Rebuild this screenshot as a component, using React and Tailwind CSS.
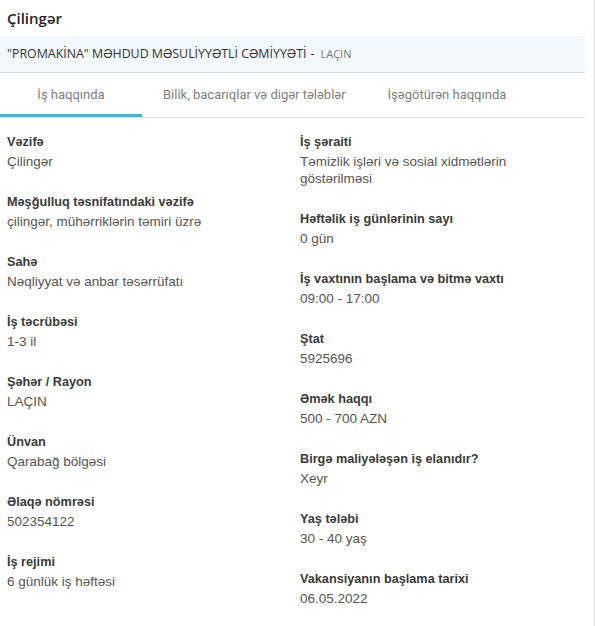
import React from 'react';

const LEFT_FIELDS = [
  { label: 'Vəzifə', value: 'Çilingər' },
  { label: 'Məşğulluq təsnifatındaki vəzifə', value: 'çilingər, mühərriklərin təmiri üzrə' },
  { label: 'Sahə', value: 'Nəqliyyat və anbar təsərrüfatı' },
  { label: 'İş təcrübəsi', value: '1-3 il' },
  { label: 'Şəhər / Rayon', value: 'LAÇIN' },
  { label: 'Ünvan', value: 'Qarabağ bölgəsi' },
  { label: 'Əlaqə nömrəsi', value: '502354122' },
  { label: 'İş rejimi', value: '6 günlük iş həftəsi' },
];

const RIGHT_FIELDS = [
  { label: 'İş şəraiti', value: 'Təmizlik işləri və sosial xidmətlərin göstərilməsi' },
  { label: 'Həftəlik iş günlərinin sayı', value: '0 gün' },
  { label: 'İş vaxtının başlama və bitmə vaxtı', value: '09:00 - 17:00' },
  { label: 'Ştat', value: '5925696' },
  { label: 'Əmək haqqı', value: '500 - 700 AZN' },
  { label: 'Birgə maliyələşən iş elanıdır?', value: 'Xeyr' },
  { label: 'Yaş tələbi', value: '30 - 40 yaş' },
  { label: 'Vakansiyanın başlama tarixi', value: '06.05.2022' },
];

const TABS = ['İş haqqında', 'Bilik, bacarıqlar və digər tələblər', 'İşəgötürən haqqında'];

const Field = ({ label, value }) => (
  <div className="mb-[23px]">
    <div className="text-[12.7px] leading-[19px] font-bold text-[#3a3a3a]">{label}</div>
    <div className="mt-[1px] text-[13.5px] leading-[17px] text-[#555] pr-10">{value}</div>
  </div>
);

const App = () => {
  return (
    <div className="w-[595px] h-[626px] bg-white flex font-['Liberation_Sans',Arial,sans-serif] overflow-hidden">
      <div className="w-[585px] shrink-0">
        <h1 className="px-[7px] pt-[8px] h-[36px] text-[15px] leading-[20px] font-semibold text-[#222] font-['Open_Sans',sans-serif]">
          Çilingər
        </h1>
        <div className="h-[37px] bg-[#f3f9fd] border-b border-[#dedede] px-[7px] flex items-center font-['Open_Sans',sans-serif]">
          <span className="text-[12.4px] text-[#333]">"PROMAKİNA" MƏHDUD MƏSULİYYƏTLİ CƏMİYYƏTİ</span>
          <span className="text-[12.4px] text-[#333] ml-[4px]">-</span>
          <span className="text-[11px] text-[#777] ml-[6px]">LAÇIN</span>
        </div>
        <div className="flex h-[45px] border-b border-[#dedede] font-['Roboto',sans-serif] text-[13px] text-[#808080]">
          {TABS.map((tab, i) => (
            <div
              key={tab}
              className={`flex items-center justify-center ${
                i === 0 ? 'w-[142px] border-b-[3px] border-[#4bb3c8] pt-[3px]' : 'px-[21px]'
              }`}
            >
              {tab}
            </div>
          ))}
        </div>
        <div className="grid grid-cols-[293px_1fr] pt-[15px] px-[7px]">
          <div>
            {LEFT_FIELDS.map((f) => (
              <Field key={f.label} {...f} />
            ))}
          </div>
          <div>
            {RIGHT_FIELDS.map((f) => (
              <Field key={f.label} {...f} />
            ))}
          </div>
        </div>
      </div>
      <div className="flex-1 border-r border-[#e6e6e6]" />
    </div>
  );
};

export default App;
